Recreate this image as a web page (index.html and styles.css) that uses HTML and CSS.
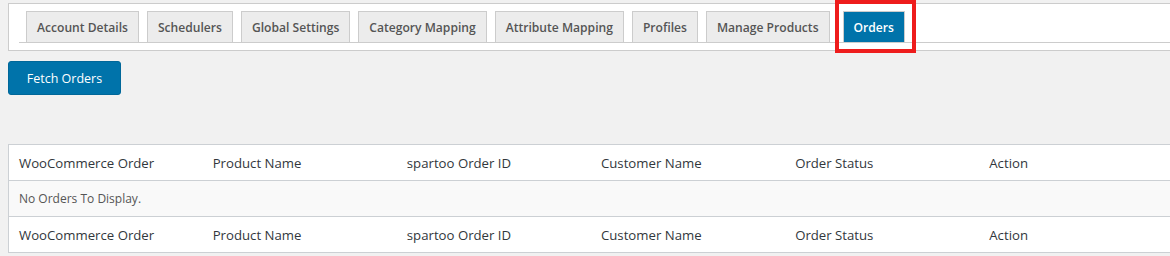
FILE: index.html
```html
<!DOCTYPE html>
<html>
<head>
<meta charset="utf-8">
<link rel="stylesheet" href="styles.css">
</head>
<body>
<div class="wrap">
  <div class="tab-box">
    <nav class="nav-tabs">
      <a class="nav-tab">Account Details</a>
      <a class="nav-tab">Schedulers</a>
      <a class="nav-tab">Global Settings</a>
      <a class="nav-tab">Category Mapping</a>
      <a class="nav-tab">Attribute Mapping</a>
      <a class="nav-tab">Profiles</a>
      <a class="nav-tab">Manage Products</a>
      <a class="nav-tab active">Orders</a>
    </nav>
  </div>
  <button class="btn-primary">Fetch Orders</button>
  <table class="orders">
    <thead>
      <tr><th>WooCommerce Order</th><th>Product Name</th><th>spartoo Order ID</th><th>Customer Name</th><th>Order Status</th><th>Action</th></tr>
    </thead>
    <tbody>
      <tr class="empty"><td colspan="6">No Orders To Display.</td></tr>
    </tbody>
    <tfoot>
      <tr><th>WooCommerce Order</th><th>Product Name</th><th>spartoo Order ID</th><th>Customer Name</th><th>Order Status</th><th>Action</th></tr>
    </tfoot>
  </table>
</div>
</body>
</html>
```
FILE: styles.css
```css
html, body {
  margin: 0;
  padding: 0;
  background: #f1f1f1;
  overflow: hidden;
}
body {
  font-family: "Open Sans", "Noto Sans", sans-serif;
  color: #444;
}
.wrap {
  width: 1170px;
  padding: 3px 0 0 8px;
}
.tab-box {
  width: 1180px;
  background: #fff;
  border: 1px solid #ccc;
  padding: 7px 0 7px 10px;
}
.nav-tabs {
  display: flex;
  gap: 8px;
  padding-left: 7px;
  border-bottom: 1px solid #ccc;
  height: 31px;
  align-items: flex-start;
}
.nav-tab {
  position: relative;
  display: block;
  box-sizing: border-box;
  height: 32px;
  padding: 6px 10px 4px;
  border: 1px solid #ccc;
  background: #ececec;
  color: #555;
  font-size: 12.1px;
  font-weight: 600;
  line-height: 20px;
  white-space: nowrap;
}
.nav-tab.active {
  background: #0073aa;
  color: #fff;
  margin-left: 5px;
}
.nav-tab.active::after {
  content: "";
  position: absolute;
  left: -9px;
  right: -12px;
  top: -12px;
  bottom: -11px;
  border: 4px solid #ee1c1c;
}
.btn-primary {
  display: block;
  margin-top: 10px;
  width: 113px;
  height: 34px;
  background: #0073aa;
  border: 1px solid #006799;
  border-radius: 3px;
  color: #fff;
  font-family: "Open Sans", "Noto Sans", sans-serif;
  font-size: 12.5px;
  padding: 0;
}
.orders {
  margin-top: 49px;
  width: 1166px;
  border-collapse: collapse;
  background: #fff;
  border: 1px solid #ccd0d4;
  table-layout: fixed;
}
.orders th {
  text-align: left;
  font-weight: 400;
  font-size: 13.2px;
  color: #32373c;
  height: 35px;
  padding: 0 10px;
}
.orders thead tr { border-bottom: 1px solid #ccd0d4; }
.orders tfoot tr { border-top: 1px solid #ccd0d4; }
.orders td {
  background: #f9f9f9;
  font-size: 12px;
  color: #555;
  height: 35px;
  padding: 0 10px;
}
```
